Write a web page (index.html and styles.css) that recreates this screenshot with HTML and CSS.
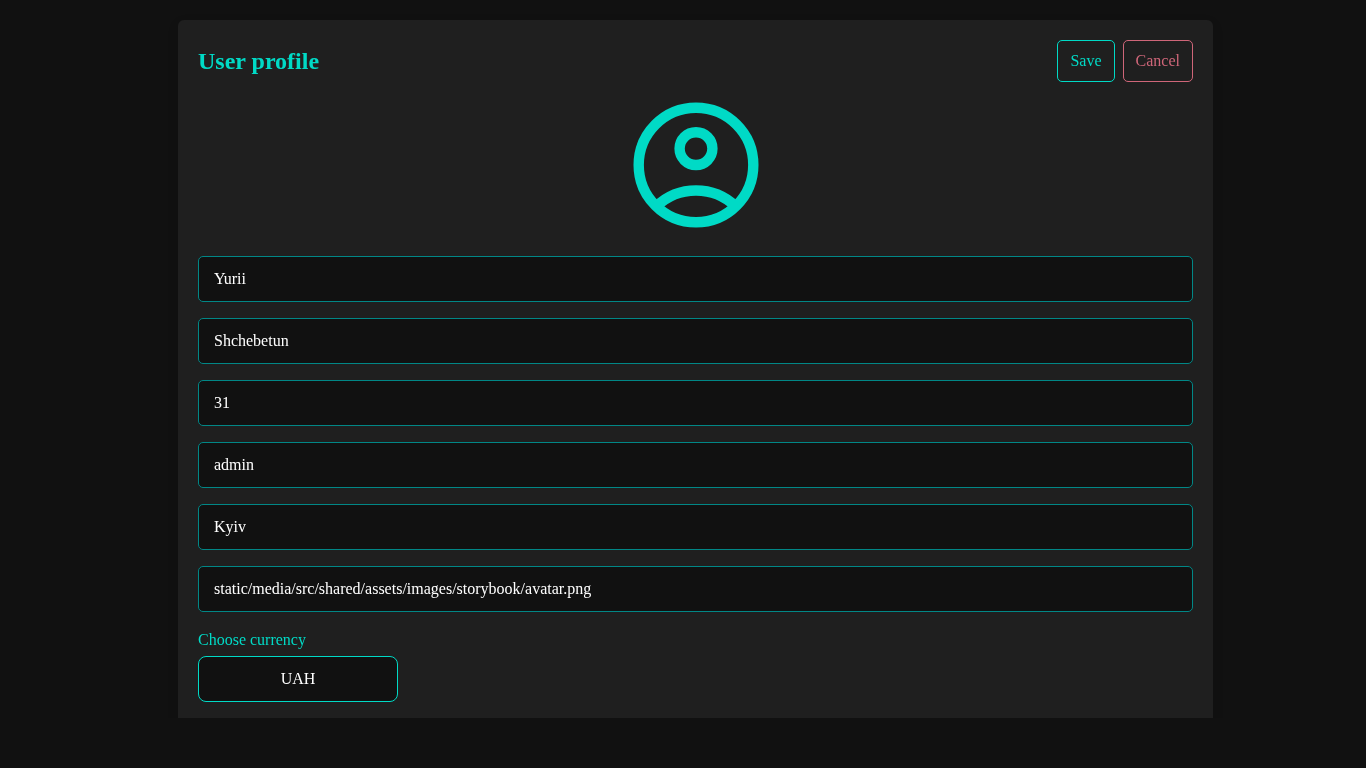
FILE: index.html
```html
<!DOCTYPE html>
<html lang="en">
<head>
<meta charset="utf-8">
<title>User profile</title>
<link rel="stylesheet" href="styles.css">
</head>
<body>
<main class="page">
  <form class="card">
    <header class="card-header">
      <h1 class="title">User profile</h1>
      <div class="actions">
        <button class="button" type="button">Save</button>
        <button class="button button-cancel" type="button">Cancel</button>
      </div>
    </header>
    <svg class="avatar" viewBox="0 0 150 150" fill="none" stroke="currentColor" stroke-width="10.42" aria-hidden="true">
      <circle cx="75" cy="75" r="57.3"/>
      <circle cx="75" cy="58.6" r="16.4"/>
      <path d="M35.4 116.4A57.3 57.3 0 0 1 114.6 116.4"/>
    </svg>
    <div class="fields">
      <input class="field" type="text" value="Yurii">
      <input class="field" type="text" value="Shchebetun">
      <input class="field" type="text" value="31">
      <input class="field" type="text" value="admin">
      <input class="field" type="text" value="Kyiv">
      <input class="field" type="text" value="static/media/src/shared/assets/images/storybook/avatar.png">
    </div>
    <div class="currency">
      <span class="label">Choose currency</span>
      <button class="select" type="button">UAH</button>
    </div>
  </form>
</main>
</body>
</html>
```
FILE: styles.css
```css
* {
  box-sizing: border-box;
}

body {
  margin: 0;
  height: 768px;
  overflow: hidden;
  background: #111;
  color: #fff;
  font: 16px/18px "Liberation Serif", serif;
}

.page {
  height: 718px;
  padding: 20px 153px 0 178px;
  overflow: hidden;
  will-change: transform;
}

.card {
  height: 760px;
  padding: 20px;
  border-radius: 6px;
  background: #1f1f1f;
  box-shadow: 0 4px 12px rgba(0, 0, 0, 0.1);
}

.card-header {
  display: flex;
  align-items: center;
  justify-content: space-between;
  height: 42px;
}

.title {
  margin: 0;
  color: #00dac6;
  font-size: 24px;
  line-height: 28px;
}

.actions {
  display: flex;
  gap: 8px;
}

.button {
  height: 42px;
  padding: 0 12px;
  border: 1px solid #00dac6;
  border-radius: 5px;
  background: none;
  color: #00dac6;
  font: inherit;
}

.button-cancel {
  border-color: #cf6679;
  color: #cf6679;
}

.avatar {
  display: block;
  width: 150px;
  height: 150px;
  margin: 8px auto 16px;
  color: #00dac6;
}

.fields {
  display: grid;
  gap: 16px;
}

.field {
  width: 100%;
  height: 46px;
  padding: 0 15px;
  border: 1px solid #018786;
  border-radius: 5px;
  outline: none;
  background: #111;
  color: #fff;
  font: inherit;
}

.currency {
  display: flex;
  flex-direction: column;
  align-items: flex-start;
  gap: 7px;
  margin-top: 19px;
}

.label {
  color: #00dac6;
}

.select {
  width: 200px;
  height: 46px;
  padding: 0;
  border: 1px solid #00dac6;
  border-radius: 8px;
  background: #111;
  color: #fff;
  font: inherit;
}
```
